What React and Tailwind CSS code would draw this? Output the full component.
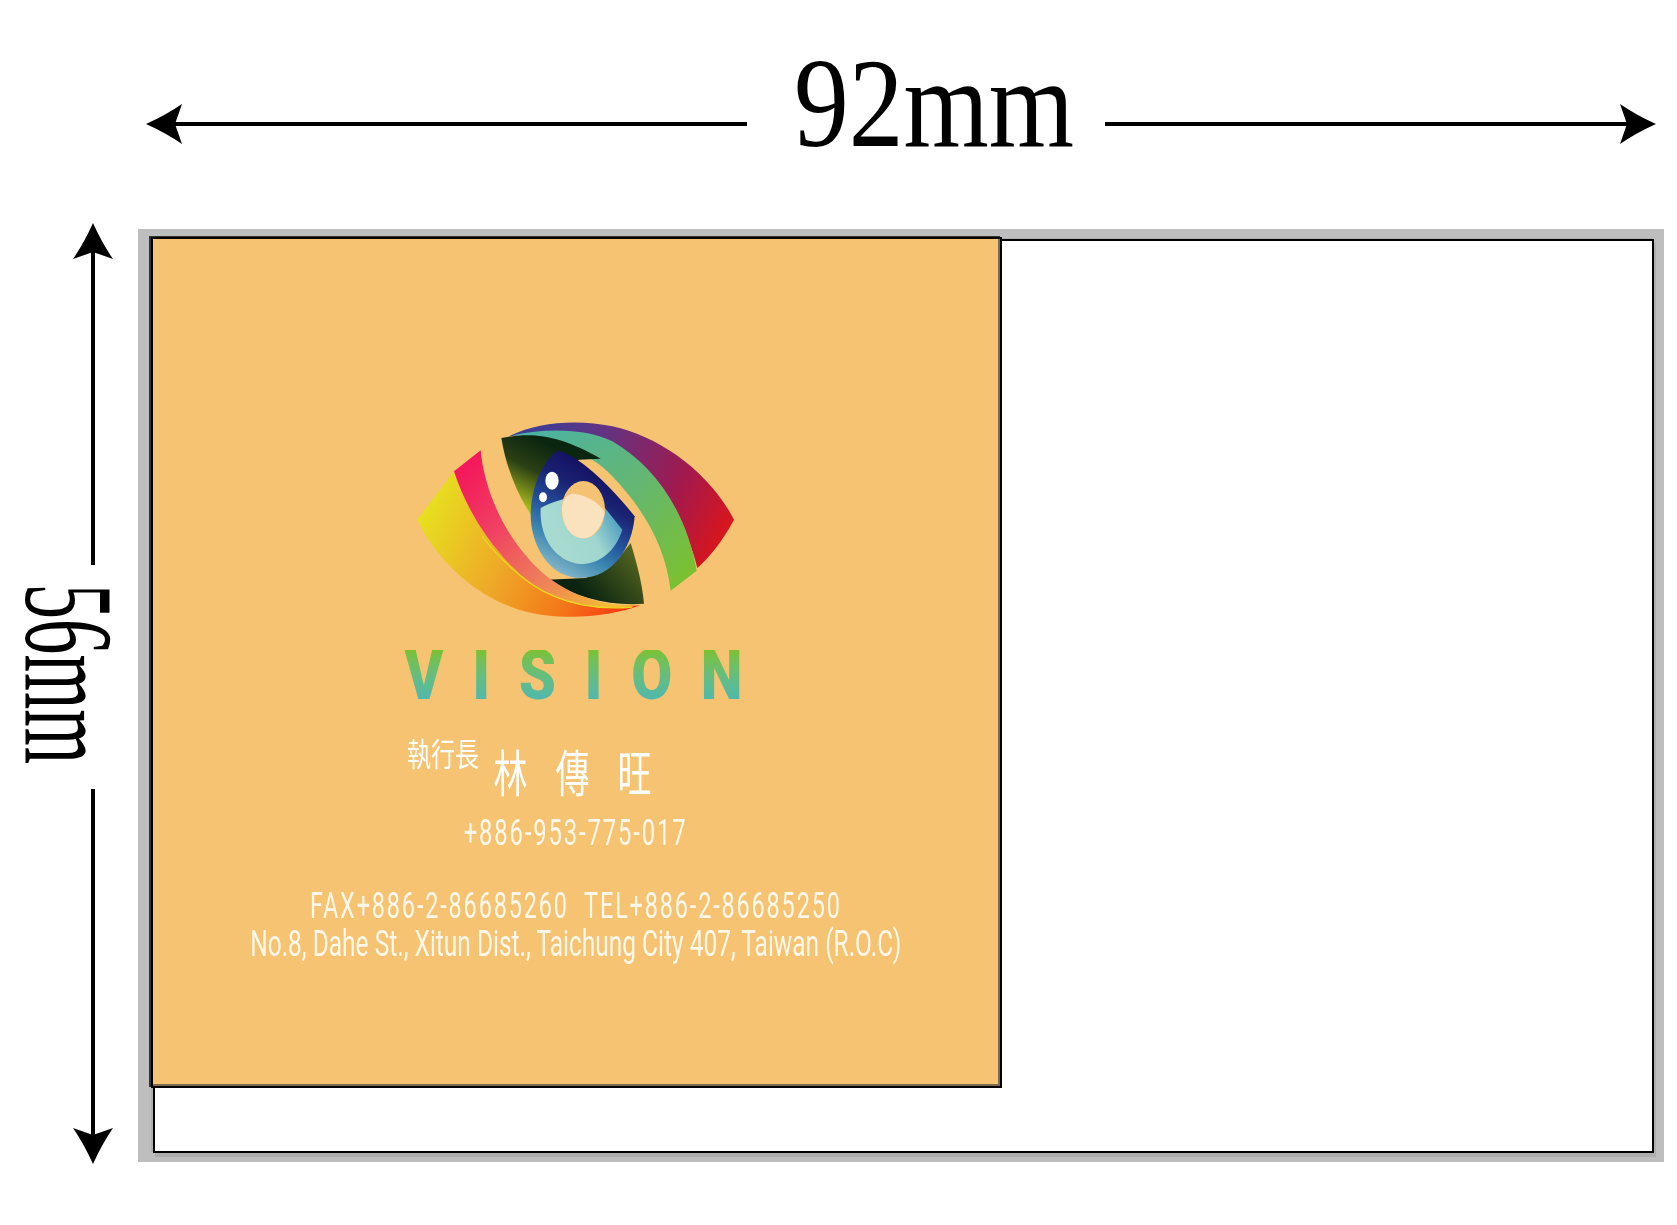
const Arrow = ({ dir, className }) => {
  const rot = { left: 0, right: 180, up: 90, down: 270 }[dir];
  return (
    <svg viewBox="0 0 36 40" width="36" height="40" className={className} style={{ transform: `rotate(${rot}deg)` }}>
      <path d="M0 20 Q20 11 36 0 L29 20 L36 40 Q20 29 0 20Z" fill="#000" />
    </svg>
  );
};

const IRIS = "M475 128 C540 140 640 240 707 325 C700 420 640 510 545 510 C450 510 395 410 395 320 C395 240 430 160 475 128Z";

const Eye = () => (
  <svg viewBox="0 0 1080 660" width="360" height="220" className="block">
    <defs>
      <linearGradient id="top" x1="330" y1="60" x2="1000" y2="400" gradientUnits="userSpaceOnUse">
        <stop offset="0" stopColor="#34409c" />
        <stop offset="0.35" stopColor="#633381" />
        <stop offset="0.7" stopColor="#a01a50" />
        <stop offset="1" stopColor="#e01515" />
      </linearGradient>
      <linearGradient id="green" x1="400" y1="70" x2="860" y2="540" gradientUnits="userSpaceOnUse">
        <stop offset="0" stopColor="#4bb3a3" />
        <stop offset="0.5" stopColor="#64b673" />
        <stop offset="1" stopColor="#7dc12c" />
      </linearGradient>
      <linearGradient id="lid" x1="450" y1="110" x2="350" y2="310" gradientUnits="userSpaceOnUse">
        <stop offset="0" stopColor="#0b2610" />
        <stop offset="0.4" stopColor="#2b3f14" />
        <stop offset="1" stopColor="#c2d81f" />
      </linearGradient>
      <linearGradient id="lid2" x1="570" y1="570" x2="730" y2="430" gradientUnits="userSpaceOnUse">
        <stop offset="0" stopColor="#0a2410" />
        <stop offset="1" stopColor="#5a6a20" />
      </linearGradient>
      <linearGradient id="iris" x1="620" y1="190" x2="450" y2="490" gradientUnits="userSpaceOnUse">
        <stop offset="0" stopColor="#140f60" />
        <stop offset="0.25" stopColor="#1a2272" />
        <stop offset="0.5" stopColor="#24509c" />
        <stop offset="0.72" stopColor="#3a86b0" />
        <stop offset="1" stopColor="#8cbccb" />
      </linearGradient>
      <linearGradient id="inner" x1="470" y1="400" x2="660" y2="300" gradientUnits="userSpaceOnUse">
        <stop offset="0" stopColor="#a8dbd0" />
        <stop offset="0.5" stopColor="#a0d6cf" />
        <stop offset="1" stopColor="#3f93bf" />
      </linearGradient>
      <linearGradient id="yel" x1="55" y1="300" x2="720" y2="600" gradientUnits="userSpaceOnUse">
        <stop offset="0" stopColor="#e6e41e" />
        <stop offset="0.4" stopColor="#eeaa28" />
        <stop offset="0.7" stopColor="#f37a1a" />
        <stop offset="1" stopColor="#fb2a10" />
      </linearGradient>
      <linearGradient id="pink" x1="200" y1="180" x2="640" y2="610" gradientUnits="userSpaceOnUse">
        <stop offset="0" stopColor="#f4185c" />
        <stop offset="0.3" stopColor="#f03f62" />
        <stop offset="0.65" stopColor="#ee8058" />
        <stop offset="1" stopColor="#f4c030" />
      </linearGradient>
      <clipPath id="irisClip">
        <path d={IRIS} />
      </clipPath>
    </defs>
    <path d="M330 85 C420 40 540 35 640 55 C780 85 930 190 1005 335 C970 400 930 450 895 480 C860 340 780 210 660 130 C570 75 440 70 330 85Z" fill="url(#top)" />
    <path d="M340 82 C440 60 560 60 640 100 C760 170 860 300 893 488 L815 548 C800 420 740 310 640 205 C570 130 450 85 340 82Z" fill="url(#green)" />
    <path d="M307 90 C400 72 480 80 605 152 L540 155 L470 220 L395 320 C350 250 320 170 307 90Z" fill="url(#lid)" />
    <path d="M445 515 L560 510 L660 450 L695 405 C715 470 730 530 735 587 C640 595 530 570 445 515Z" fill="url(#lid2)" />
    <path d={IRIS} fill="url(#iris)" />
    <g clipPath="url(#irisClip)">
      <path d="M425 300 C480 270 560 250 610 290 L670 365 C650 430 600 470 540 468 C470 460 420 390 425 300Z" fill="url(#inner)" />
    </g>
    <ellipse cx="553" cy="305" rx="65" ry="86" fill="#f5c273" />
    <path d="M489 300 C490 270 510 255 530 258 C570 265 600 285 617 312 C610 360 580 392 553 391 C515 390 488 350 489 300Z" fill="#f9e2bd" />
    <ellipse cx="459" cy="218" rx="20" ry="27" fill="#fff" />
    <ellipse cx="432" cy="268" rx="12" ry="15" fill="#fff" />
    <path d="M55 335 L165 190 C210 300 290 420 400 500 C480 570 620 600 725 592 C620 630 480 640 360 605 C220 560 110 450 55 335Z" fill="url(#yel)" />
    <path d="M165 190 L245 127 C255 240 310 370 400 465 C480 550 600 600 723 592 C600 612 490 590 400 530 C300 450 210 330 165 190Z" fill="url(#pink)" />
    <path d="M250 385 C300 450 350 495 400 530 C490 590 600 607 700 597" fill="none" stroke="#e8d820" strokeWidth="4" />
  </svg>
);

export default function App() {
  return (
    <div className="w-[1677px] h-[1225px] bg-white flex flex-col font-['Liberation_Serif',serif] overflow-hidden">
      {/* horizontal dimension */}
      <div className="mt-[84px] ml-[146px] w-[1510px] h-[80px] flex items-center shrink-0">
        <Arrow dir="left" className="shrink-0" />
        <div className="h-[4px] w-[573px] bg-black -ml-[8px]" />
        <div className="w-[358px] flex justify-center shrink-0 text-[126px] leading-[80px] text-black">
          <span className="scale-x-[0.87] inline-block translate-x-[8px] -translate-y-[20px]">92mm</span>
        </div>
        <div className="h-[4px] flex-1 bg-black -mr-[8px]" />
        <Arrow dir="right" className="shrink-0" />
      </div>

      <div className="mt-[59px] flex">
        {/* vertical dimension */}
        <div className="w-[138px] h-[941px] flex flex-col shrink-0">
          <div className="ml-[73px] w-[40px] flex flex-col items-center">
            <div className="h-[36px] w-[40px] flex items-center justify-center"><Arrow dir="up" /></div>
            <div className="w-[4px] h-[314px] bg-black -mt-[8px]" />
          </div>
          <div className="h-[224px] ml-[27px] w-[83px] flex items-center justify-center shrink-0">
            <span className="[writing-mode:vertical-rl] text-[126px] leading-[83px] scale-y-[0.56] -translate-y-[3px] text-black">56mm</span>
          </div>
          <div className="ml-[73px] w-[40px] flex flex-col items-center flex-1">
            <div className="w-[4px] flex-1 bg-black -mb-[8px]" />
            <div className="h-[36px] w-[40px] flex items-center justify-center"><Arrow dir="down" /></div>
          </div>
        </div>

        {/* frame */}
        <div className="mt-[6px] w-[1526px] h-[933px] bg-[#bfbebe] pl-[15px] pr-[10px] pt-[10px] pb-[9px]">
          <div className="w-full h-full bg-white border-2 border-black shadow-[2px_4px_0_#aeaeae,-2px_-1px_0_#aeaeae]">
            <div className="-ml-[4px] -mt-[4px] w-[851px] h-[851px] border-l-[2px] border-t-[2px] border-r-[2px] border-b-[2px] border-black shadow-[-2px_-1px_0_#333]">
              <div className="w-full h-full bg-[#f5c372] border-b-2 border-r-2 border-[#7a6a50] flex flex-col items-center font-['Roboto',sans-serif] text-[#fff8ea]">
                <div className="mt-[169px] ml-[6px] shrink-0"><Eye /></div>
                <div className="mt-[22px] h-[50px] text-[70px] leading-[50px] font-black whitespace-nowrap">
                  <span className="inline-block scale-x-[0.85] tracking-[0.48em] bg-gradient-to-b from-[#7bc12f] to-[#4fb8ae] bg-clip-text text-transparent translate-x-[12px]">VISION</span>
                </div>
                <div className="mt-[36px] pr-[108px] flex items-start font-['Noto_Sans_CJK_TC',sans-serif] text-white h-[60px]">
                  <span className="text-[32px] leading-[32px] inline-block scale-x-[0.75] w-[72px] text-center whitespace-nowrap">執行長</span>
                  <span className="ml-[18px] mt-[9px] flex gap-[28px] text-[50px] leading-[50px]">
                    <span className="inline-block scale-x-[0.68] w-[34px]">林</span>
                    <span className="inline-block scale-x-[0.68] w-[34px]">傳</span>
                    <span className="inline-block scale-x-[0.68] w-[34px]">旺</span>
                  </span>
                </div>
                <div className="mt-[24px] h-[26px] text-[36px] leading-[26px] whitespace-nowrap">
                  <span className="inline-block scale-x-[0.66] tracking-[0.08em]">+886-953-775-017</span>
                </div>
                <div className="mt-[47px] h-[26px] text-[36px] leading-[26px] whitespace-nowrap">
                  <span className="inline-block scale-x-[0.65] tracking-[0.08em]">FAX+886-2-86685260&nbsp;&nbsp;TEL+886-2-86685250</span>
                </div>
                <div className="mt-[12px] h-[26px] text-[36px] leading-[26px] whitespace-nowrap">
                  <span className="inline-block scale-x-[0.68]">No.8, Dahe St., Xitun Dist., Taichung City 407, Taiwan (R.O.C)</span>
                </div>
              </div>
            </div>
          </div>
        </div>
      </div>
    </div>
  );
}
